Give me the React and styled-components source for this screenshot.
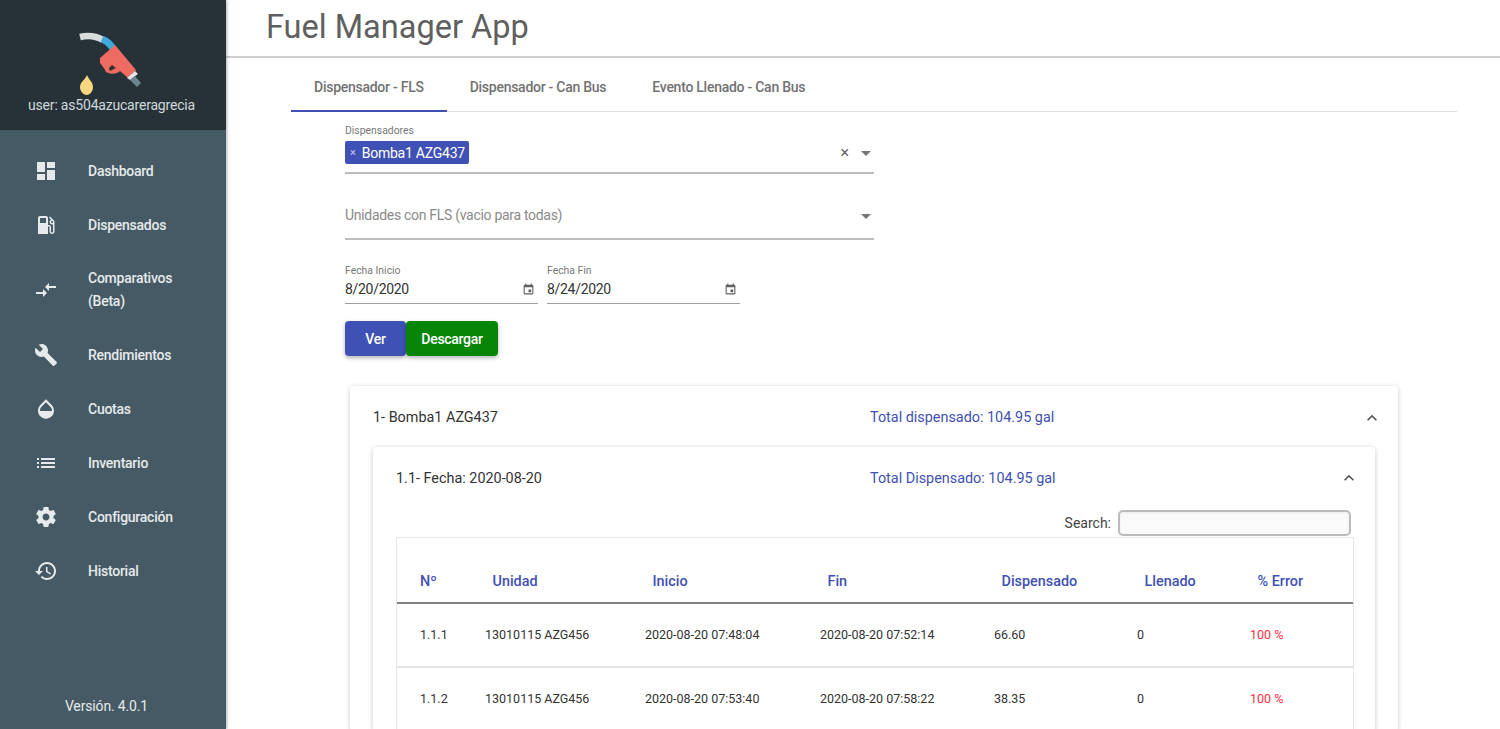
import React from "react";
import styled, { createGlobalStyle } from "styled-components";

const Global = createGlobalStyle`
  html, body { margin: 0; padding: 0; height: 100%; overflow: hidden; background: #fff; }
  * { box-sizing: border-box; }
  body { font-family: Roboto, "Liberation Sans", sans-serif; }
`;

const Shell = styled.div`display: flex; width: 1500px; height: 729px; overflow: hidden;`;
const Sidebar = styled.aside`
  width: 226px; flex: none; background: #455a64; color: #eceff1; display: flex; flex-direction: column;
  box-shadow: 1px 0 3px rgba(0,0,0,.3); position: relative; z-index: 2;
`;
const Brand = styled.div`
  height: 130px; background: #263238; display: flex; flex-direction: column; align-items: center; padding-top: 30px; flex: none;
`;
const BrandUser = styled.div`font-size: 14px; letter-spacing: -.2px; line-height: 16px; color: #cfd8dc; white-space: nowrap; margin: 1px 3px 0 0;`;
const Nav = styled.nav`display: flex; flex-direction: column; padding-top: 14px; flex: 1;`;
const NavItem = styled.a`
  display: flex; align-items: center; padding: 15px 0 15px 34px; font-size: 14px; letter-spacing: -.25px; font-weight: 500; line-height: 23px; color: #e6eaec;
`;
const NavLabel = styled.span`margin-left: 30px; width: 100px;`;
const Version = styled.div`text-align: center; font-size: 14px; letter-spacing: -.15px; color: #e6eaec; padding: 0 13px 15px 0; line-height: 16px;`;

const Main = styled.main`flex: 1; min-width: 0; display: flex; flex-direction: column;`;
const TopBar = styled.header`
  height: 58px; flex: none; padding-left: 40px; display: flex; align-items: flex-start; border-bottom: 2px solid #cfcfcf;
`;
const Title = styled.h1`margin: 7px 0 0; font-size: 32.5px; line-height: 40px; font-weight: 400; color: #5f5f5f;`;
const Content = styled.div`padding: 6px 43px 0 65px; flex: 1; min-height: 0;`;
const Tabs = styled.div`display: flex; height: 48px; border-bottom: 1px solid #e0e0e0;`;
const Tab = styled.div`
  padding: 0 23px; font-size: 14px; letter-spacing: -.26px; font-weight: 500; color: #727272; display: flex; align-items: center; height: 48px;
  border-bottom: 2px solid ${p => p.$active ? "#3f51b5" : "transparent"}; white-space: nowrap;
`;
const Form = styled.div`padding-left: 54px; width: 583px;`;
const SmallLabel = styled.div`font-size: 10.4px; line-height: 12px; color: #777;`;
const FieldLabel = styled(SmallLabel)`margin-top: 13px;`;
const SelectField = styled.div`
  height: ${p => p.$h}px; padding-top: ${p => p.$top}px; border-bottom: 2px solid #bdbdbd; display: flex; align-items: flex-start; justify-content: space-between;
`;
const Chip = styled.span`
  background: #3f51b5; color: #fff; font-size: 14px; letter-spacing: -.23px; height: 23px; border-radius: 2px; display: inline-flex; align-items: center; padding: 0 4px 0 5px; font-weight: 400;
`;
const ChipX = styled.span`font-size: 11px; color: #c5cae9; margin-right: 6px;`;
const Controls = styled.div`display: flex; align-items: center; height: 23px; color: #757575; gap: 12px;`;
const ClearX = styled.span`font-size: 16px; color: #666;`;
const Caret = styled.span`width: 0; height: 0; border-left: 5px solid transparent; border-right: 5px solid transparent; border-top: 5px solid #757575; margin: 2px 3px 0 0;`;
const Placeholder = styled.span`font-size: 14px; letter-spacing: -.3px; line-height: 23px; color: #8a8a8a;`;
const Dates = styled.div`display: flex; gap: 9px; margin-top: 25px;`;
const DateField = styled.div`width: 193px;`;
const DateValue = styled.div`
  height: 26px; margin-top: 1px; border-bottom: 1px solid #9e9e9e; display: flex; align-items: center; justify-content: space-between; font-size: 14px; letter-spacing: -.3px; color: #333; padding: 0 3px 3px 0;
`;
const Actions = styled.div`display: flex; margin-top: 17px;`;
const Button = styled.button`
  height: 35px; width: ${p => p.$w}px; border: 0; border-radius: 4px; background: ${p => p.$bg}; color: #fff; font: 500 14px Roboto, sans-serif; letter-spacing: -.3px;
  box-shadow: 0 2px 4px rgba(0,0,0,.3); padding: 0;
`;
const Card = styled.section`
  background: #fff; border-radius: 4px; box-shadow: 0 1px 5px rgba(0,0,0,.22);
  padding: 0 23px; margin: ${p => p.$outer ? "30px 0 0 59px" : "0"}; width: ${p => p.$outer ? "1048px" : "1002px"};
`;
const CardHead = styled.div`
  height: ${p => p.$h}px; padding-top: ${p => p.$top || 0}px; display: grid; grid-template-columns: ${p => p.$title}px 1fr 24px; align-items: center; font-size: 14.4px; color: #333;
  margin-right: -11px;
`;
const Total = styled.span`color: #3f51b5;`;
const SearchRow = styled.div`display: flex; justify-content: flex-end; align-items: center; height: 28px; font-size: 14px; color: #444; gap: 7px; padding-right: 1px;`;
const SearchInput = styled.input`
  width: 233px; height: 26px; border: 2px solid #bbb; border-radius: 5px; background: #fafafa; box-shadow: inset 0 1px 3px rgba(0,0,0,.06);
`;
const TableBox = styled.div`border: 1px solid #e6e6e6; border-bottom: 0; width: 958px;`;
const Grid = styled.div`
  display: grid; grid-template-columns: 65px 160px 175px 174px 143px 113px 1fr; padding-left: 23px; align-items: center;
`;
const HeadRow = styled(Grid)`height: 66px; padding-top: 22px; border-bottom: 2px solid #808080;`;
const HeadCell = styled.div`font-size: 14.4px; font-weight: 500; color: #3f51b5; padding-left: ${p => p.$first ? 0 : 7.5}px;`;
const Row = styled(Grid)`height: 63.5px; border-bottom: 2px solid #e4e4e4; font-size: 12.5px; color: #333;`;
const Err = styled.span`color: #ff2d45;`;

const I = ({ d, size = 24, color = "currentColor" }) => (
  <svg width={size} height={size} viewBox="0 0 24 24" fill={color} style={{ flex: "none" }}><path d={d} /></svg>
);

const icons = {
  dashboard: "M3 13h8V3H3v10zm0 8h8v-6H3v6zm10 0h8V11h-8v10zm0-18v6h8V3h-8z",
  gas: "M19.77 7.23l.01-.01-3.72-3.72L15 4.56l2.11 2.11c-.94.36-1.61 1.26-1.61 2.33 0 1.38 1.12 2.5 2.5 2.5.36 0 .69-.08 1-.21v7.21c0 .55-.45 1-1 1s-1-.45-1-1V14c0-1.1-.9-2-2-2h-1V5c0-1.1-.9-2-2-2H6c-1.1 0-2 .9-2 2v16h10v-7.5h1.5v5c0 1.38 1.12 2.5 2.5 2.5s2.5-1.12 2.5-2.5V9c0-.69-.28-1.32-.73-1.77zM12 10H6V5h6v5zm6 0c-.55 0-1-.45-1-1s.45-1 1-1 1 .45 1 1-.45 1-1 1z",
  compare: "M9.01 14H2v2h7.01v3L13 15l-3.99-4v3zm5.98-1v-3H22V8h-7.01V5L11 9l3.99 4z",
  build: "M22.7 19l-9.1-9.1c.9-2.3.4-5-1.5-6.9-2-2-5-2.4-7.4-1.3L9 6 6 9 1.6 4.7C.4 7.1.9 10.1 2.9 12.1c1.9 1.9 4.6 2.4 6.9 1.5l9.1 9.1c.4.4 1 .4 1.4 0l2.3-2.3c.5-.4.5-1.1.1-1.4z",
  opacity: "M17.66 8L12 2.35 6.34 8C4.78 9.56 4 11.64 4 13.64s.78 4.11 2.34 5.67 3.61 2.35 5.66 2.35 4.1-.79 5.66-2.35S20 15.64 20 13.64 19.22 9.56 17.66 8zM6 14c.01-2 .62-3.27 1.76-4.4L12 5.27l4.24 4.38C17.38 10.77 17.99 12 18 14H6z",
  list: "M3 13h2v-2H3v2zm0 4h2v-2H3v2zm0-8h2V7H3v2zm4 4h14v-2H7v2zm0 4h14v-2H7v2zM7 7v2h14V7H7z",
  settings: "M19.43 12.98c.04-.32.07-.64.07-.98s-.03-.66-.07-.98l2.11-1.65c.19-.15.24-.42.12-.64l-2-3.46c-.12-.22-.39-.3-.61-.22l-2.49 1c-.52-.4-1.08-.73-1.69-.98l-.38-2.65C14.46 2.18 14.25 2 14 2h-4c-.25 0-.46.18-.49.42l-.38 2.65c-.61.25-1.17.59-1.69.98l-2.49-1c-.23-.09-.49 0-.61.22l-2 3.46c-.13.22-.07.49.12.64l2.11 1.65c-.04.32-.07.65-.07.98s.03.66.07.98l-2.11 1.65c-.19.15-.24.42-.12.64l2 3.46c.12.22.39.3.61.22l2.49-1c.52.4 1.08.73 1.69.98l.38 2.65c.03.24.24.42.49.42h4c.25 0 .46-.18.49-.42l.38-2.65c.61-.25 1.17-.59 1.69-.98l2.49 1c.23.09.49 0 .61-.22l2-3.46c.12-.22.07-.49-.12-.64l-2.11-1.65zM12 15.5c-1.93 0-3.5-1.57-3.5-3.5s1.57-3.5 3.5-3.5 3.5 1.57 3.5 3.5-1.57 3.5-3.5 3.5z",
  history: "M13 3c-4.97 0-9 4.03-9 9H1l3.89 3.89.07.14L9 12H6c0-3.87 3.13-7 7-7s7 3.13 7 7-3.13 7-7 7c-1.93 0-3.68-.79-4.94-2.06l-1.42 1.42C8.27 19.99 10.51 21 13 21c4.97 0 9-4.03 9-9s-4.03-9-9-9zm-1 5v5l4.28 2.54.72-1.21-3.5-2.08V8H12z",
  event: "M17 12h-5v5h5v-5zM16 1v2H8V1H6v2H5c-1.11 0-1.99.9-1.99 2L3 19c0 1.1.89 2 2 2h14c1.1 0 2-.9 2-2V5c0-1.1-.9-2-2-2h-1V1h-2zm3 18H5V8h14v11z",
  up: "M12 8l-6 6 1.41 1.41L12 10.83l4.59 4.58L18 14z",
};

const Logo = () => (
  <svg width="80" height="66" viewBox="0 0 80 66" style={{ flex: "none" }}>
    <path d="M7 7 C15 5 23 6 30 10" fill="none" stroke="#d9dcdd" strokeWidth="6.5" />
    <path d="M29 9 C34 11 38 15 41 20" fill="none" stroke="#3fa9dc" strokeWidth="7" />
    <path d="M27 28 L42 15 L63 40 L55 48 L47 41 C44 44 38 45 33 42 C32 39 30 37 27 33 Z" fill="#ed6b60" />
    <path d="M36 38 L39 35 L43 38 L37 41 Z" fill="#33302e" />
    <path d="M54 48 L62 41 L65 44 L57 50 Z" fill="#dfe3e4" />
    <path d="M57 50 L62 46 L68 53 L64 57 Z" fill="#6d8591" />
    <path d="M14 45 C16 50 20 52 20 57 C20 61 17 65 14 65 C10 65 7 61 7 57 C7 52 12 50 14 45 Z" fill="#f9d77e" />
  </svg>
);

const navItems = [
  ["dashboard", "Dashboard"],
  ["gas", "Dispensados"],
  ["compare", "Comparativos (Beta)"],
  ["build", "Rendimientos"],
  ["opacity", "Cuotas"],
  ["list", "Inventario"],
  ["settings", "Configuración"],
  ["history", "Historial"],
];

const rows = [
  ["1.1.1", "13010115 AZG456", "2020-08-20 07:48:04", "2020-08-20 07:52:14", "66.60", "0", "100 %"],
  ["1.1.2", "13010115 AZG456", "2020-08-20 07:53:40", "2020-08-20 07:58:22", "38.35", "0", "100 %"],
];

export default function App() {
  return (
    <>
      <Global />
      <Shell>
        <Sidebar>
          <Brand>
            <Logo />
            <BrandUser>user: as504azucareragrecia</BrandUser>
          </Brand>
          <Nav>
            {navItems.map(([icon, label]) => (
              <NavItem key={label}>
                <I d={icons[icon]} />
                <NavLabel>{label}</NavLabel>
              </NavItem>
            ))}
          </Nav>
          <Version>Versión. 4.0.1</Version>
        </Sidebar>
        <Main>
          <TopBar><Title>Fuel Manager App</Title></TopBar>
          <Content>
            <Tabs>
              <Tab $active>Dispensador - FLS</Tab>
              <Tab>Dispensador - Can Bus</Tab>
              <Tab>Evento Llenado - Can Bus</Tab>
            </Tabs>
            <Form>
              <FieldLabel>Dispensadores</FieldLabel>
              <SelectField $h={37} $top={4}>
                <Chip><ChipX>×</ChipX>Bomba1 AZG437</Chip>
                <Controls><ClearX>×</ClearX><Caret /></Controls>
              </SelectField>
              <SelectField $h={66} $top={30}>
                <Placeholder>Unidades con FLS (vacio para todas)</Placeholder>
                <Controls><Caret /></Controls>
              </SelectField>
              <Dates>
                <DateField>
                  <SmallLabel>Fecha Inicio</SmallLabel>
                  <DateValue>8/20/2020<I d={icons.event} size={13} color="#616161" /></DateValue>
                </DateField>
                <DateField>
                  <SmallLabel>Fecha Fin</SmallLabel>
                  <DateValue>8/24/2020<I d={icons.event} size={13} color="#616161" /></DateValue>
                </DateField>
              </Dates>
              <Actions>
                <Button $w={61} $bg="#3f51b5">Ver</Button>
                <Button $w={92} $bg="#078507">Descargar</Button>
              </Actions>
            </Form>
            <Card $outer>
              <CardHead $h={61} $top={2} $title={497}>
                <span>1- Bomba1 AZG437</span>
                <Total>Total dispensado: 104.95 gal</Total>
                <I d={icons.up} size={20} color="#555" />
              </CardHead>
              <Card>
                <CardHead $h={62} $title={474}>
                  <span>1.1- Fecha: 2020-08-20</span>
                  <Total>Total Dispensado: 104.95 gal</Total>
                  <I d={icons.up} size={20} color="#555" />
                </CardHead>
                <SearchRow>Search: <SearchInput /></SearchRow>
                <TableBox>
                  <HeadRow>
                    <HeadCell $first>Nº</HeadCell>
                    <HeadCell>Unidad</HeadCell>
                    <HeadCell>Inicio</HeadCell>
                    <HeadCell>Fin</HeadCell>
                    <HeadCell>Dispensado</HeadCell>
                    <HeadCell>Llenado</HeadCell>
                    <HeadCell>% Error</HeadCell>
                  </HeadRow>
                  {rows.map(r => (
                    <Row key={r[0]}>
                      {r.slice(0, 6).map((c, i) => <div key={i}>{c}</div>)}
                      <Err>{r[6]}</Err>
                    </Row>
                  ))}
                </TableBox>
              </Card>
            </Card>
          </Content>
        </Main>
      </Shell>
    </>
  );
}
